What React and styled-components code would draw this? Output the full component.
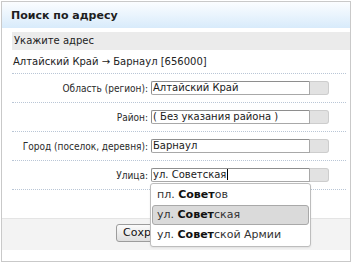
import React from 'react';
import styled, { createGlobalStyle } from 'styled-components';

const Global = createGlobalStyle`
  html, body { margin: 0; padding: 0; background: #fff; }
  body {
    font-family: "DejaVu Sans", Verdana, sans-serif;
    font-size: 10px;
    color: #222;
  }
`;

const Panel = styled.div`
  margin: 1px 0 0 1px;
  width: 350px;
  height: 261px;
  box-sizing: border-box;
  border: 1px solid #c9c9c9;
  display: flex;
  flex-direction: column;
  overflow: hidden;
`;

const Header = styled.div`
  height: 26px;
  flex: none;
  display: flex;
  align-items: center;
  padding-left: 9px;
  background: linear-gradient(to bottom, #fbfdff 0%, #d8ebfb 100%);
  font-weight: bold;
  font-size: 11px;
  color: #1e1e1e;
`;

const Body = styled.div`
  flex: 1;
  padding: 4px 0 0 10px;
  display: flex;
  flex-direction: column;
`;

const HintBar = styled.div`
  height: 18px;
  line-height: 18px;
  padding-left: 2px;
  background: #ebebeb;
  color: #222;
`;

const Row = styled.div`
  margin-right: 4px;
  border-bottom: 1px dotted #b9c6d6;
`;

const PathRow = styled(Row)`
  height: 23px;
  line-height: 23px;
  padding-left: 1px;
`;

const FormRow = styled(Row)`
  height: 28px;
  display: grid;
  grid-template-columns: 136px 1fr;
  column-gap: 3px;
  align-items: center;
`;

const Label = styled.div`
  display: flex;
  justify-content: flex-end;
  white-space: nowrap;
  font-family: "DejaVu Sans Condensed", "DejaVu Sans", Verdana, sans-serif;
  font-stretch: condensed;
  color: #2a2a2a;
`;

const Field = styled.div`
  position: relative;
  display: flex;
  height: 14px;
  margin-top: -1px;
`;

const InputBox = styled.div`
  width: 159px;
  height: 14px;
  box-sizing: border-box;
  border: 1px solid #a8a8a8;
  border-top-color: #8e8e8e;
  border-left-color: #8e8e8e;
  border-radius: 2px 0 0 2px;
  background: #fff;
  padding-left: 1px;
  line-height: 12px;
  display: flex;
  align-items: center;
  white-space: nowrap;
  color: #1a1a1a;
`;

const Caret = styled.span`
  display: inline-block;
  width: 1px;
  height: 11px;
  background: #000;
  margin-left: 1px;
`;

const DropButton = styled.div`
  width: 19px;
  height: 14px;
  box-sizing: border-box;
  background: #e2e2e2;
  border: 1px solid #cdcdcd;
  border-left: none;
  border-radius: 0 3px 3px 0;
`;

const Suggest = styled.div`
  position: absolute;
  top: calc(100% + 1px);
  left: -1px;
  width: 161px;
  box-sizing: border-box;
  padding: 1px;
  background: #fff;
  border: 1px solid #bdbdbd;
  border-radius: 3px;
  box-shadow: 0 1px 2px rgba(0, 0, 0, 0.08);
  z-index: 5;
  font-size: 11px;
`;

const SuggestItem = styled.div`
  height: 20px;
  box-sizing: border-box;
  line-height: 18px;
  padding-left: 4px;
  border: 1px solid ${p => (p.$active ? '#a9a9a9' : 'transparent')};
  border-radius: 3px;
  background: ${p => (p.$active ? '#dadada' : 'transparent')};
  color: #333;
  white-space: nowrap;
  b { color: #111; }
`;

const Spacer = styled.div`
  flex: 1;
`;

const Footer = styled.div`
  flex: none;
  height: 26px;
  margin-bottom: 11px;
  border-top: 1px solid #e4e4e4;
  background: #f3f3f3;
  padding: 5px 0 0 114px;
  display: flex;
  align-items: flex-start;
`;

const SaveButton = styled.button`
  height: 18px;
  padding: 0 6px;
  font-family: "DejaVu Sans", Verdana, sans-serif;
  font-size: 11px;
  color: #111;
  border: 1px solid #9c9c9c;
  border-radius: 3px;
  background: linear-gradient(to bottom, #fbfbfb 0%, #dedede 100%);
  line-height: 16px;
`;

const fields = [
  { label: 'Область (регион):', value: 'Алтайский Край' },
  { label: 'Район:', value: '( Без указания района )' },
  { label: 'Город (поселок, деревня):', value: 'Барнаул' },
];

const suggestions = [
  { pre: 'пл. ', rest: 'ов' },
  { pre: 'ул. ', rest: 'ская', active: true },
  { pre: 'ул. ', rest: 'ской Армии' },
];

export default function App() {
  return (
    <>
      <Global />
      <Panel>
        <Header>Поиск по адресу</Header>
        <Body>
          <HintBar>Укажите адрес</HintBar>
          <PathRow>Алтайский Край → Барнаул [656000]</PathRow>
          {fields.map(f => (
            <FormRow key={f.label}>
              <Label>{f.label}</Label>
              <Field>
                <InputBox>{f.value}</InputBox>
                <DropButton />
              </Field>
            </FormRow>
          ))}
          <FormRow>
            <Label>Улица:</Label>
            <Field>
              <InputBox>
                ул. Советская<Caret />
              </InputBox>
              <DropButton />
              <Suggest>
                {suggestions.map((s, i) => (
                  <SuggestItem key={i} $active={s.active}>
                    {s.pre}
                    <b>Совет</b>
                    {s.rest}
                  </SuggestItem>
                ))}
              </Suggest>
            </Field>
          </FormRow>
          <Spacer />
        </Body>
        <Footer>
          <SaveButton>Сохранить</SaveButton>
        </Footer>
      </Panel>
    </>
  );
}
